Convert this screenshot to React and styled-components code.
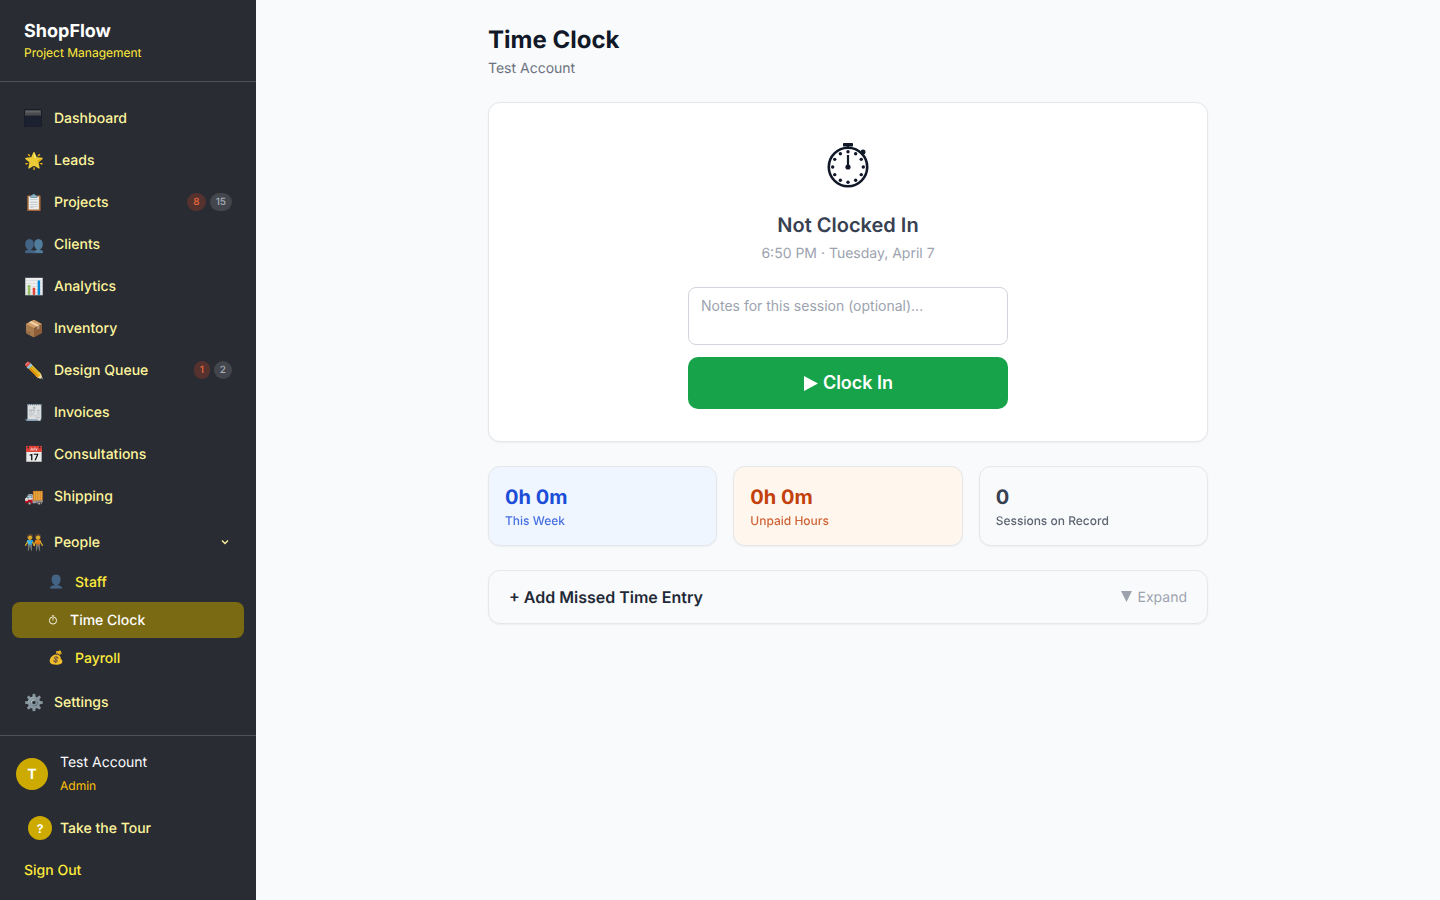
import React from "react";
import styled, { createGlobalStyle } from "styled-components";

const GlobalStyle = createGlobalStyle`
  * { box-sizing: border-box; }
  html, body { margin: 0; padding: 0; height: 100%; }
  body {
    font-family: Inter, "Noto Sans", sans-serif;
    background: #f9fafb;
    color: #111827;
    text-rendering: geometricPrecision;
    -webkit-font-smoothing: antialiased;
  }
`;

const navItems = [
  { icon: <DashboardIcon />, label: "Dashboard" },
  { icon: "🌟", label: "Leads" },
  { icon: "📋", label: "Projects", red: 8, gray: 15 },
  { icon: "👥", label: "Clients", muted: true },
  { icon: "📊", label: "Analytics" },
  { icon: "📦", label: "Inventory" },
  { icon: "✏️", label: "Design Queue", red: 1, gray: 2 },
  { icon: "🧾", label: "Invoices", muted: true },
  { icon: "📅", label: "Consultations" },
  { icon: "🚚", label: "Shipping" },
];

function DashboardIcon() {
  return (
    <svg width="18" height="18" viewBox="0 0 18 18">
      <rect x="0.5" y="0.5" width="17" height="17" fill="#1a2030" stroke="#12151d" strokeDasharray="1 1" />
      <rect x="1" y="1" width="16" height="5.5" fill="#4d4f50" />
      <rect x="2" y="2" width="14" height="1.5" fill="#66686a" />
    </svg>
  );
}

function SmallClockIcon() {
  return (
    <svg width="10" height="10" viewBox="0 0 10 10" fill="none" stroke="#f5f2dc">
      <circle cx="5" cy="5.5" r="3.6" strokeWidth="1" />
      <path d="M3.8 0.8H6.2M5 3V5.5" strokeWidth="0.9" />
    </svg>
  );
}

function StopwatchIcon() {
  const dots = Array.from({ length: 12 }, (_, i) => (i * Math.PI) / 6);
  return (
    <svg width="48" height="48" viewBox="0 0 48 48">
      <rect x="19" y="1" width="10" height="3.5" rx="0.8" fill="#111827" />
      <rect x="23" y="3" width="2" height="3" fill="#111827" />
      <circle cx="39" cy="10" r="2.5" fill="#111827" />
      <circle cx="24" cy="25" r="19.2" fill="#fff" stroke="#111827" strokeWidth="2.6" />
      {dots.map((a) => (
        <circle
          key={a}
          cx={24 + 15.3 * Math.sin(a)}
          cy={25 - 15.3 * Math.cos(a)}
          r="1.7"
          fill="#111827"
        />
      ))}
      <rect x="22.9" y="13" width="2.2" height="12" fill="#111827" />
      <circle cx="24" cy="25" r="2.6" fill="#111827" />
    </svg>
  );
}

export default function App() {
  return (
    <Page>
      <GlobalStyle />
      <Sidebar>
        <Brand>
          <BrandName>ShopFlow</BrandName>
          <BrandTag>Project Management</BrandTag>
        </Brand>
        <Nav>
          {navItems.map((item) => (
            <NavRow key={item.label}>
              <NavIcon $muted={item.muted}>{item.icon}</NavIcon>
              <NavLabel>{item.label}</NavLabel>
              {item.red && (
                <Badges>
                  <Badge $red>{item.red}</Badge>
                  <Badge>{item.gray}</Badge>
                </Badges>
              )}
            </NavRow>
          ))}
          <GroupRow>
            <NavIcon>🧑‍🤝‍🧑</NavIcon>
            <NavLabel>People</NavLabel>
            <svg width="10" height="10" viewBox="0 0 10 10" fill="none" stroke="#fff59d" strokeWidth="1.3">
              <path d="M2 3.5 5 6.5 8 3.5" />
            </svg>
          </GroupRow>
          <SubRow>
            <SubIcon $muted>👤</SubIcon>
            <SubLabel>Staff</SubLabel>
          </SubRow>
          <ActiveRow>
            <ActiveIcon>
              <SmallClockIcon />
            </ActiveIcon>
            <ActiveLabel>Time Clock</ActiveLabel>
          </ActiveRow>
          <SubRow>
            <SubIcon>💰</SubIcon>
            <SubLabel>Payroll</SubLabel>
          </SubRow>
          <SettingsRow>
            <NavIcon $muted>⚙️</NavIcon>
            <NavLabel>Settings</NavLabel>
          </SettingsRow>
        </Nav>
        <Footer>
          <UserRow>
            <Avatar>T</Avatar>
            <UserText>
              <UserName>Test Account</UserName>
              <UserRole>Admin</UserRole>
            </UserText>
          </UserRow>
          <TourRow>
            <TourIcon>?</TourIcon>
            <TourLabel>Take the Tour</TourLabel>
          </TourRow>
          <SignOut>Sign Out</SignOut>
        </Footer>
      </Sidebar>
      <Main>
        <Content>
          <Title>Time Clock</Title>
          <Subtitle>Test Account</Subtitle>
          <ClockCard>
            <StopwatchIcon />
            <Status>Not Clocked In</Status>
            <DateLine>6:50 PM · Tuesday, April 7</DateLine>
            <Notes placeholder="Notes for this session (optional)..." />
            <ClockButton>
              <svg width="14" height="15" viewBox="0 0 14 15" fill="#fff">
                <path d="M0 0 14 7.5 0 15Z" />
              </svg>
              <span>Clock In</span>
            </ClockButton>
          </ClockCard>
          <Stats>
            <StatCard $bg="#eff6ff">
              <StatValue $color="#1d4ed8">0h 0m</StatValue>
              <StatLabel $color="#1d4ed8">This Week</StatLabel>
            </StatCard>
            <StatCard $bg="#fff7ed">
              <StatValue $color="#c2410c">0h 0m</StatValue>
              <StatLabel $color="#c2410c">Unpaid Hours</StatLabel>
            </StatCard>
            <StatCard $bg="#f9fafb">
              <StatValue $color="#374151">0</StatValue>
              <StatLabel $color="#374151">Sessions on Record</StatLabel>
            </StatCard>
          </Stats>
          <MissedRow>
            <MissedTitle>+ Add Missed Time Entry</MissedTitle>
            <Expand>
              <svg width="11" height="11" viewBox="0 0 11 11" fill="#9ca3af">
                <path d="M0 0H11L5.5 11Z" />
              </svg>
              <span>Expand</span>
            </Expand>
          </MissedRow>
        </Content>
      </Main>
    </Page>
  );
}

const Page = styled.div`
  display: flex;
  height: 900px;
  overflow: hidden;
`;

const Sidebar = styled.aside`
  width: 256px;
  flex-shrink: 0;
  display: flex;
  flex-direction: column;
  background: #292c33;
`;

const Brand = styled.div`
  height: 82px;
  padding: 21px 24px 0;
  border-bottom: 1px solid #4f5257;
`;

const BrandName = styled.div`
  font-size: 18px;
  line-height: 22px;
  font-weight: 700;
  color: #fff;
`;

const BrandTag = styled.div`
  margin-top: 2px;
  font-size: 12px;
  line-height: 16px;
  font-weight: 400;
  color: #ffeb3b;
`;

const Nav = styled.nav`
  flex: 1;
  padding-top: 15px;
`;

const NavRow = styled.div`
  height: 42px;
  padding: 0 24px;
  display: flex;
  align-items: center;
`;

const GroupRow = styled(NavRow)`
  margin-top: 4px;
  padding-right: 26px;
`;

const SettingsRow = styled(NavRow)`
  margin-top: 4px;
`;

const NavIcon = styled.span`
  width: 30px;
  flex-shrink: 0;
  display: flex;
  align-items: center;
  height: 20px;
  font-size: 16px;
  line-height: 20px;
  filter: ${(p) => (p.$muted ? "saturate(0.4) opacity(0.85)" : "opacity(0.92)")};
`;

const NavLabel = styled.span`
  flex: 1;
  padding-top: 1px;
  font-size: 14px;
  line-height: 20px;
  font-weight: 500;
  color: #fff59d;
`;

const Badges = styled.span`
  display: flex;
  gap: 4px;
`;

const Badge = styled.span`
  height: 18px;
  padding: 0 6px;
  border-radius: 9px;
  display: flex;
  align-items: center;
  justify-content: center;
  font-size: 10px;
  font-weight: 500;
  background: ${(p) => (p.$red ? "#56322f" : "#43464c")};
  color: ${(p) => (p.$red ? "#ea6a3a" : "#a9afba")};
`;

const SubRow = styled.div`
  height: 38px;
  padding-left: 48px;
  display: flex;
  align-items: center;
`;

const SubIcon = styled.span`
  width: 27px;
  flex-shrink: 0;
  font-size: 13px;
  line-height: 18px;
  filter: ${(p) => (p.$muted ? "saturate(0.4) opacity(0.85)" : "opacity(0.92)")};
`;

const SubLabel = styled.span`
  padding-top: 1px;
  font-size: 14px;
  line-height: 20px;
  font-weight: 500;
  color: #ffeb3b;
`;

const ActiveRow = styled.div`
  height: 36px;
  margin: 1px 12px;
  padding-left: 36px;
  display: flex;
  align-items: center;
  border-radius: 8px;
  background: #7a6a14;
`;

const ActiveIcon = styled.span`
  width: 22px;
  display: flex;
  align-items: center;
`;

const ActiveLabel = styled.span`
  padding-top: 1px;
  font-size: 14px;
  line-height: 20px;
  font-weight: 500;
  color: #fff;
`;

const Footer = styled.div`
  height: 165px;
  flex-shrink: 0;
  border-top: 1px solid #4f5257;
`;

const UserRow = styled.div`
  padding: 17px 16px 0;
  display: flex;
  align-items: flex-start;
  gap: 12px;
`;

const Avatar = styled.div`
  margin-top: 5px;
  width: 32px;
  height: 32px;
  border-radius: 50%;
  display: flex;
  align-items: center;
  justify-content: center;
  background: #ccaa00;
  color: #fff;
  font-size: 14px;
  font-weight: 700;
`;

const UserText = styled.div`
  display: flex;
  flex-direction: column;
`;

const UserName = styled.span`
  font-size: 14px;
  line-height: 20px;
  font-weight: 400;
  color: #f9fafb;
`;

const UserRole = styled.span`
  margin-top: 5px;
  font-size: 12px;
  line-height: 16px;
  font-weight: 400;
  color: #ffc107;
`;

const TourRow = styled.div`
  margin-top: 22px;
  padding-left: 28px;
  display: flex;
  align-items: center;
  gap: 8px;
`;

const TourLabel = styled.span`
  padding-top: 1px;
  font-size: 14px;
  line-height: 20px;
  font-weight: 500;
  color: #fff59d;
`;

const TourIcon = styled.span`
  width: 24px;
  height: 24px;
  border-radius: 50%;
  display: flex;
  align-items: center;
  justify-content: center;
  background: #ccaa00;
  color: #fff;
  font-size: 12px;
  font-weight: 700;
`;

const SignOut = styled.div`
  margin-top: 21px;
  padding-left: 24px;
  font-size: 14px;
  line-height: 20px;
  font-weight: 500;
  color: #ffeb3b;
`;

const Main = styled.main`
  flex: 1;
  display: flex;
  justify-content: center;
`;

const Content = styled.div`
  width: 720px;
  padding-top: 24px;
`;

const Title = styled.h1`
  margin: 0;
  font-size: 24px;
  line-height: 32px;
  font-weight: 700;
  color: #111827;
`;

const Subtitle = styled.div`
  margin-top: 3px;
  font-size: 14px;
  line-height: 20px;
  color: #6b7280;
`;

const ClockCard = styled.section`
  margin-top: 23px;
  height: 340px;
  padding-top: 39px;
  display: flex;
  flex-direction: column;
  align-items: center;
  background: #fff;
  border: 1px solid #e5e7eb;
  border-radius: 12px;
  box-shadow: 0 1px 2px rgba(0, 0, 0, 0.05);
`;

const Status = styled.div`
  margin-top: 21px;
  font-size: 20px;
  line-height: 28px;
  font-weight: 600;
  color: #374151;
`;

const DateLine = styled.div`
  margin-top: 5px;
  font-size: 14px;
  line-height: 20px;
  color: #9ca3af;
`;

const Notes = styled.textarea`
  margin-top: 23px;
  width: 320px;
  height: 58px;
  padding: 9px 12px;
  resize: none;
  border: 1px solid #d1d5db;
  border-radius: 8px;
  outline: none;
  font-family: inherit;
  font-size: 14px;
  line-height: 17px;
  &::placeholder {
    color: #9ca3af;
    opacity: 1;
  }
`;

const ClockButton = styled.button`
  margin-top: 12px;
  width: 320px;
  height: 52px;
  padding: 0 0 0 1px;
  border: 0;
  border-radius: 10px;
  display: flex;
  align-items: center;
  justify-content: center;
  gap: 5px;
  background: #16a34a;
  color: #fff;
  font-family: inherit;
  font-size: 18px;
  line-height: 24px;
  font-weight: 600;
`;

const Stats = styled.div`
  margin-top: 24px;
  display: grid;
  grid-template-columns: repeat(3, 1fr);
  gap: 16px;
`;

const StatCard = styled.div`
  height: 80px;
  padding: 16px;
  background: ${(p) => p.$bg};
  border: 1px solid #e5e7eb;
  border-radius: 12px;
  box-shadow: 0 1px 2px rgba(0, 0, 0, 0.05);
`;

const StatValue = styled.div`
  font-size: 20px;
  line-height: 28px;
  font-weight: 700;
  color: ${(p) => p.$color};
`;

const StatLabel = styled.div`
  margin-top: 2px;
  font-size: 12px;
  line-height: 16px;
  font-weight: 500;
  opacity: 0.8;
  color: ${(p) => p.$color};
`;

const MissedRow = styled.div`
  margin-top: 24px;
  height: 54px;
  padding: 0 20px;
  display: flex;
  align-items: center;
  justify-content: space-between;
  background: #f9fafb;
  border: 1px solid #e5e7eb;
  border-radius: 12px;
  box-shadow: 0 1px 2px rgba(0, 0, 0, 0.05);
`;

const MissedTitle = styled.span`
  font-size: 16px;
  line-height: 20px;
  font-weight: 600;
  color: #1f2937;
`;

const Expand = styled.span`
  padding-top: 1px;
  display: flex;
  align-items: center;
  gap: 6px;
  font-size: 14px;
  line-height: 20px;
  color: #9ca3af;
  svg {
    margin-top: -2px;
  }
`;
